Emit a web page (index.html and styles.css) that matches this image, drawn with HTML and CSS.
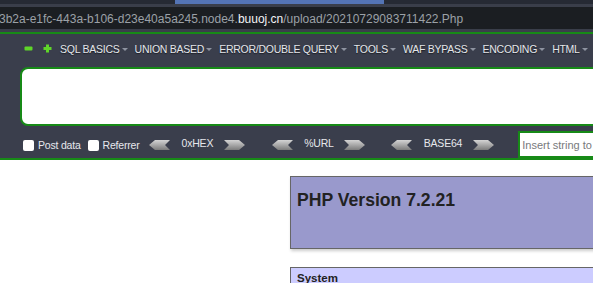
FILE: index.html
```html
<!DOCTYPE html>
<html>
<head>
<meta charset="utf-8">
<link rel="stylesheet" href="styles.css">
</head>
<body>
<div class="chrome">
  <div class="tabs"><div class="tab-active"></div></div>
  <div class="strip"></div>
  <div class="urlbar"><span class="url-dim">3b2a-e1fc-443a-b106-d23e40a5a245.node4.</span><span class="url-host">buuoj.cn</span><span class="url-dim">/upload/20210729083711422.Php</span></div>
  <div class="strip strip-b"></div>
</div>
<div class="hackbar">
  <div class="menu">
    <svg class="ico ico-minus" width="9" height="5" viewBox="0 0 9 5"><rect x="0.5" y="0.5" width="8" height="4" rx="1" fill="#5fd629"/></svg>
    <svg class="ico ico-plus" width="9" height="9" viewBox="0 0 9 9"><path d="M3 0.5h3v2.5h2.5v3h-2.5v2.5h-3v-2.5h-2.5v-3h2.5z" fill="#5fd629"/></svg>
    <span class="item">SQL BASICS<i class="caret"></i></span>
    <span class="item">UNION BASED<i class="caret"></i></span>
    <span class="item">ERROR/DOUBLE QUERY<i class="caret"></i></span>
    <span class="item">TOOLS<i class="caret"></i></span>
    <span class="item">WAF BYPASS<i class="caret"></i></span>
    <span class="item">ENCODING<i class="caret"></i></span>
    <span class="item">HTML<i class="caret"></i></span>
  </div>
  <div class="textarea"></div>
  <div class="controls">
    <span class="check"></span><span class="lbl lbl-post">Post data</span>
    <span class="check"></span><span class="lbl">Referrer</span>
    <div class="enc enc-hex">
      <svg class="arr" width="21" height="10" viewBox="0 0 21 10"><defs><linearGradient id="g1" x1="0" y1="0" x2="0" y2="1"><stop offset="0" stop-color="#d4d4d4"/><stop offset="1" stop-color="#7c7c7c"/></linearGradient></defs><polygon points="0,5 6,0 21,0 16,5 21,10 6,10" fill="url(#g1)"/></svg>
      <span class="enc-lbl">0xHEX</span>
      <svg class="arr" width="21" height="10" viewBox="0 0 21 10"><polygon points="0,0 15,0 21,5 15,10 0,10 5,5" fill="url(#g1)"/></svg>
    </div>
    <div class="enc enc-url">
      <svg class="arr" width="21" height="10" viewBox="0 0 21 10"><polygon points="0,5 6,0 21,0 16,5 21,10 6,10" fill="url(#g1)"/></svg>
      <span class="enc-lbl">%URL</span>
      <svg class="arr" width="21" height="10" viewBox="0 0 21 10"><polygon points="0,0 15,0 21,5 15,10 0,10 5,5" fill="url(#g1)"/></svg>
    </div>
    <div class="enc enc-b64">
      <svg class="arr" width="21" height="10" viewBox="0 0 21 10"><polygon points="0,5 6,0 21,0 16,5 21,10 6,10" fill="url(#g1)"/></svg>
      <span class="enc-lbl">BASE64</span>
      <svg class="arr" width="21" height="10" viewBox="0 0 21 10"><polygon points="0,0 15,0 21,5 15,10 0,10 5,5" fill="url(#g1)"/></svg>
    </div>
    <div class="input"><span class="ph">Insert string to</span></div>
  </div>
</div>
<div class="page">
  <div class="phpbox"><h1 class="php-title">PHP Version 7.2.21</h1></div>
  <div class="sysrow">System</div>
</div>
</body>
</html>
```
FILE: styles.css
```css
html, body {
  margin: 0;
  padding: 0;
  background: #ffffff;
  overflow: hidden;
  width: 593px;
  height: 283px;
  font-family: "Liberation Sans", Arial, sans-serif;
}

.chrome {
  background: #1b1e22;
}

.tabs {
  height: 4px;
  background: #262a34;
  display: flex;
}

.tab-active {
  margin-left: 175px;
  width: 209px;
  background: #5474b5;
}

.strip {
  height: 3px;
  background: #3a3e4a;
}

.urlbar {
  height: 22px;
  box-sizing: border-box;
  padding-top: 5px;
  margin-left: -1px;
  font-size: 12px;
  line-height: 14px;
  white-space: nowrap;
  background: #1b1e22;
}

.url-dim {
  color: #9ca1a7;
}

.url-host {
  color: #f2f3f4;
}

.hackbar {
  background: #3a3e4c;
  border-top: 2px solid #178a17;
  border-bottom: 2px solid #178a17;
  height: 124px;
  box-sizing: content-box;
  display: flex;
  flex-direction: column;
  overflow: hidden;
}

.menu {
  height: 29px;
  display: flex;
  align-items: center;
  padding-left: 24px;
  white-space: nowrap;
}

.ico {
  display: block;
  flex: none;
}

.ico-minus {
  margin-right: 10px;
}

.ico-plus {
  margin-right: 8px;
}

.item {
  display: inline-flex;
  align-items: center;
  font-size: 10.5px;
  letter-spacing: -0.25px;
  color: #e3e6ea;
  text-shadow: 0 1px 1px #1c1e26;
  margin-right: 7px;
  flex: none;
}

.caret {
  display: inline-block;
  width: 0;
  height: 0;
  margin-left: 2px;
  margin-top: 2px;
  border-left: 3px solid transparent;
  border-right: 3px solid transparent;
  border-top: 3px solid #8e93a0;
}

.textarea {
  margin-top: 4px;
  margin-left: 20px;
  width: 600px;
  height: 59px;
  box-sizing: border-box;
  background: #ffffff;
  border: 2px solid #178a17;
  border-radius: 8px;
  flex: none;
}

.controls {
  margin-top: 5px;
  height: 27px;
  display: flex;
  align-items: center;
  padding-left: 23px;
  white-space: nowrap;
}

.check {
  width: 11px;
  height: 11px;
  background: #ffffff;
  border-radius: 2px;
  flex: none;
  margin-top: 1px;
}

.lbl {
  font-size: 10.5px;
  letter-spacing: -0.2px;
  color: #e6e8ec;
  margin-left: 4px;
}

.lbl-post {
  margin-right: 7px;
}

.enc {
  display: flex;
  align-items: center;
  flex: none;
}

.enc-hex {
  margin-left: 9px;
}

.enc-url {
  margin-left: 27px;
}

.enc-b64 {
  margin-left: 26px;
}

.arr {
  display: block;
  flex: none;
}

.enc-lbl {
  font-size: 10.5px;
  letter-spacing: -0.2px;
  color: #e6e8ec;
  padding: 0 11px 0 12px;
  margin-top: -3px;
}

.enc-url .enc-lbl {
  padding: 0 10px 0 11px;
}

.input {
  margin-left: 24px;
  width: 200px;
  height: 27px;
  box-sizing: border-box;
  background: #ffffff;
  border: 2px solid #178a17;
  display: flex;
  align-items: center;
  padding-left: 2px;
  flex: none;
}

.ph {
  font-size: 11px;
  color: #77797c;
}

.page {
  padding-left: 290px;
  padding-top: 16px;
}

.phpbox {
  width: 620px;
  height: 73px;
  box-sizing: border-box;
  background: #9999cc;
  border: 1px solid #666666;
  box-shadow: 1px 2px 3px #cccccc;
  padding: 13px 6px 0 6px;
}

.php-title {
  margin: 0;
  font-size: 17.6px;
  line-height: 21px;
  font-weight: bold;
  color: #222222;
}

.sysrow {
  margin-top: 18px;
  width: 620px;
  box-sizing: border-box;
  background: #ccccff;
  border: 1px solid #666666;
  padding: 4px 6px;
  font-size: 11.5px;
  font-weight: bold;
  color: #222222;
}
```
